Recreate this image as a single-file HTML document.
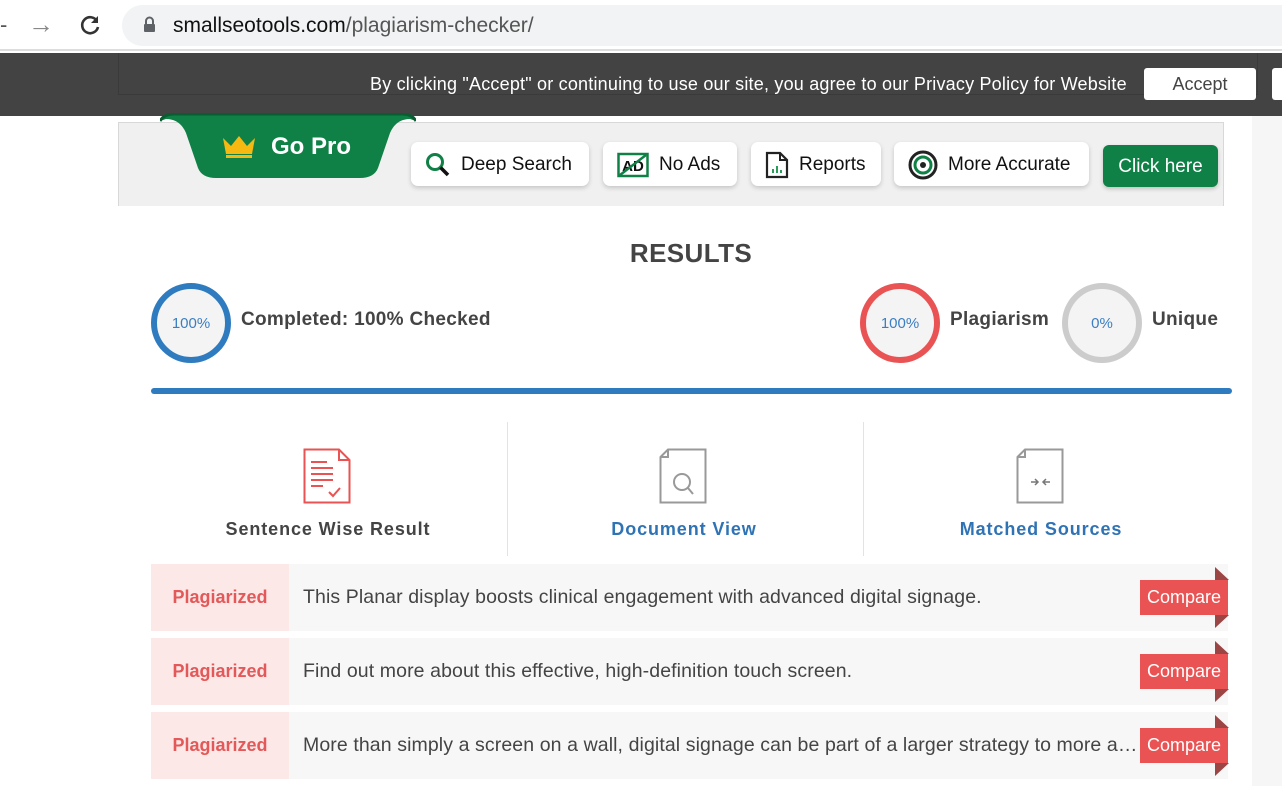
<!DOCTYPE html>
<html><head><meta charset="utf-8"><style>
*{margin:0;padding:0;box-sizing:border-box}
body{width:1282px;height:786px;overflow:hidden;background:#fff;font-family:"Liberation Sans",Arial,sans-serif;position:relative}
.abs{position:absolute}
.btn{position:absolute;top:142px;height:44px;background:#fff;border-radius:7px;box-shadow:0 2px 5px rgba(0,0,0,.18);font-size:19px;color:#111;display:flex;align-items:center;padding-left:14px;gap:10px;padding-top:2px}
.circ{position:absolute;width:80px;height:80px;border-radius:50%;background:#f4f4f4;border:6px solid;display:flex;align-items:center;justify-content:center;font-size:15px;color:#3b7ec2}
.lbl{position:absolute;font-size:19px;font-weight:bold;color:#444;letter-spacing:0.3px}
.row{position:absolute;left:151px;width:1077px;height:67px;background:#f7f7f7}
.row .p{position:absolute;left:0;top:0;width:138px;height:67px;background:#fde8e8;color:#e35858;font-weight:bold;font-size:18px;display:flex;align-items:center;justify-content:center}
.row .t{position:absolute;left:152px;top:22px;font-size:19.5px;letter-spacing:0.1px;color:#444;white-space:nowrap;width:838px;overflow:hidden;text-overflow:ellipsis}
.row .c{position:absolute;left:989px;top:16px;width:88px;height:35px;background:#e95353;color:#fff;font-size:18px;display:flex;align-items:center;justify-content:center}
.row .f1{position:absolute;left:1064px;top:3px;width:0;height:0;border-left:14px solid #9b4545;border-top:13px solid transparent}
.row .f2{position:absolute;left:1064px;top:51px;width:0;height:0;border-left:14px solid #9b4545;border-bottom:13px solid transparent}
.tab{position:absolute;top:519px;font-size:18px;font-weight:bold;text-align:center;width:356px;letter-spacing:0.9px}
</style></head><body>
<div class="abs" style="left:0;top:0;width:1282px;height:51px;background:#fff;border-bottom:2px solid #ddd"></div>
<div class="abs" style="left:0;top:12px;font-size:22px;color:#555">-</div>
<div class="abs" style="left:28px;top:9px;font-size:26px;color:#888">→</div>
<svg class="abs" style="left:78px;top:13px" width="24" height="24" viewBox="0 0 24 24"><path d="M19 8A8 8 0 1 0 20 14" fill="none" stroke="#333" stroke-width="2.6"/><path d="M20 3v7h-7z" fill="#333"/></svg>
<div class="abs" style="left:122px;top:5px;width:1200px;height:41px;border-radius:21px;background:#f1f3f4"></div>
<svg class="abs" style="left:143px;top:16px" width="13" height="17" viewBox="0 0 13 17"><path d="M3 8V5a3.5 3.5 0 0 1 7 0v3" fill="none" stroke="#5f6368" stroke-width="2"/><rect x="1" y="8" width="11" height="8" rx="1" fill="#5f6368"/></svg>
<div class="abs" style="left:173px;top:14px;font-size:21px;color:#111">smallseotools.com<span style="color:#555">/plagiarism-checker/</span></div>
<div class="abs" style="left:0;top:53px;width:1282px;height:63px;background:#434343"></div>
<div class="abs" style="left:118px;top:53px;width:1140px;height:42px;border:1px solid #3a3a3a;border-top:none"></div>
<div class="abs" style="left:370px;top:74px;font-size:18px;color:#fff;letter-spacing:0.2px">By clicking "Accept" or continuing to use our site, you agree to our Privacy Policy for Website</div>
<div class="abs" style="left:1144px;top:68px;width:112px;height:32px;background:#fff;border-radius:3px;font-size:18px;color:#444;text-align:center;line-height:32px">Accept</div>
<div class="abs" style="left:1272px;top:68px;width:20px;height:32px;background:#fff;border-radius:3px"></div>
<div class="abs" style="left:1252px;top:116px;width:30px;height:670px;background:#f6f6f6"></div>
<div class="abs" style="left:118px;top:122px;width:1106px;height:84px;background:#f0f0f0;border:1px solid #d8d8d8;border-bottom:none"></div>
<svg class="abs" style="left:160px;top:113px" width="256" height="66" viewBox="0 0 256 66"><path d="M0 8Q4 1 14 1H242Q252 1 256 8L250 6Q236 6 230 20L218 55Q214 65 200 65H56Q42 65 38 55L26 20Q20 6 6 6Z" fill="#108146"/><path d="M0 8Q4 1 14 1H242Q252 1 256 8" fill="none" stroke="#0a5c31" stroke-width="3"/></svg>
<svg class="abs" style="left:221px;top:134px" width="36" height="24" viewBox="0 0 36 24"><path d="M2 4L10 12L18 2L26 12L34 4L31 20H5Z" fill="#f6b911"/><rect x="5" y="21" width="26" height="3" fill="#f6b911"/></svg>
<div class="abs" style="left:271px;top:133px;font-size:24px;font-weight:bold;color:#fff">Go Pro</div>
<div class="btn" style="left:411px;width:178px"><svg width="26" height="26" viewBox="0 0 26 26"><circle cx="10" cy="10" r="7.5" fill="none" stroke="#108146" stroke-width="3"/><path d="M15.5 15.5L23 23" stroke="#111" stroke-width="3.5"/></svg>Deep Search</div>
<div class="btn" style="left:603px;width:134px"><svg width="32" height="26" viewBox="0 0 32 26"><rect x="1.5" y="2" width="29" height="22" fill="none" stroke="#108146" stroke-width="2.5"/><text x="16" y="19" font-size="15" font-weight="bold" text-anchor="middle" fill="#111" font-family="Liberation Sans">AD</text><path d="M3 23L29 3" stroke="#108146" stroke-width="2.5"/></svg>No Ads</div>
<div class="btn" style="left:751px;width:130px"><svg width="24" height="28" viewBox="0 0 24 28"><path d="M2 2H15L22 9V26H2Z" fill="none" stroke="#222" stroke-width="2.2"/><path d="M15 2V9H22" fill="none" stroke="#222" stroke-width="2"/><rect x="7" y="18" width="2" height="4" fill="#2a9d5c"/><rect x="11" y="15" width="2" height="7" fill="#2a9d5c"/><rect x="15" y="19" width="2" height="3" fill="#2a9d5c"/></svg>Reports</div>
<div class="btn" style="left:894px;width:195px"><svg width="30" height="30" viewBox="0 0 30 30"><circle cx="15" cy="15" r="13" fill="none" stroke="#222" stroke-width="3"/><circle cx="15" cy="15" r="8" fill="none" stroke="#108146" stroke-width="3"/><circle cx="15" cy="15" r="3" fill="#222"/></svg>More Accurate</div>
<div class="abs" style="left:1103px;top:145px;width:115px;height:42px;background:#108146;border-radius:6px;color:#fff;font-size:19px;text-align:center;line-height:43px;box-shadow:0 2px 4px rgba(0,0,0,.2)">Click here</div>
<div class="abs" style="left:118px;top:206px;width:1134px;height:580px;background:#fff"></div>
<div class="abs" style="left:0;top:238px;width:1382px;text-align:center;font-size:26px;font-weight:bold;color:#444;letter-spacing:0.4px">RESULTS</div>
<div class="circ" style="left:151px;top:283px;border-color:#2f7bbf">100%</div>
<div class="lbl" style="left:241px;top:309px">Completed: 100% Checked</div>
<div class="circ" style="left:860px;top:283px;border-color:#e95353">100%</div>
<div class="lbl" style="left:950px;top:309px">Plagiarism</div>
<div class="circ" style="left:1062px;top:283px;border-color:#ccc">0%</div>
<div class="lbl" style="left:1152px;top:309px">Unique</div>
<div class="abs" style="left:151px;top:388px;width:1081px;height:6px;background:#2f7bbf;border-radius:3px"></div>
<div class="abs" style="left:507px;top:422px;width:1px;height:134px;background:#e3e3e3"></div>
<div class="abs" style="left:863px;top:422px;width:1px;height:134px;background:#e3e3e3"></div>
<svg class="abs" style="left:303px;top:448px" width="48" height="56" viewBox="0 0 48 56"><path d="M1.5 1.5H36L46.5 12V54.5H1.5Z" fill="none" stroke="#e95353" stroke-width="2"/><path d="M36 1.5V12H46.5" fill="none" stroke="#e95353" stroke-width="2"/><path d="M8 14H24M8 20H30M8 26H30M8 32H30M8 38H20" stroke="#e95353" stroke-width="2"/><path d="M26 44L30 48L37 40" fill="none" stroke="#e95353" stroke-width="2"/></svg>
<svg class="abs" style="left:659px;top:448px" width="48" height="56" viewBox="0 0 48 56"><path d="M1.5 9L9 1.5H46.5V54.5H1.5Z" fill="none" stroke="#999" stroke-width="2"/><path d="M9 1.5V9H1.5" fill="none" stroke="#999" stroke-width="2"/><circle cx="23" cy="34" r="8" fill="none" stroke="#999" stroke-width="2"/><path d="M29 40L34 46" stroke="#999" stroke-width="2"/></svg>
<svg class="abs" style="left:1016px;top:448px" width="48" height="56" viewBox="0 0 48 56"><path d="M1.5 9L9 1.5H46.5V54.5H1.5Z" fill="none" stroke="#999" stroke-width="2"/><path d="M9 1.5V9H1.5" fill="none" stroke="#999" stroke-width="2"/><path d="M15 34H22M19 31L22 34L19 37M34 34H27M30 31L27 34L30 37" fill="none" stroke="#777" stroke-width="1.5"/></svg>
<div class="tab" style="left:150px;color:#444">Sentence Wise Result</div>
<div class="tab" style="left:506px;color:#2f73b5">Document View</div>
<div class="tab" style="left:863px;color:#2f73b5">Matched Sources</div>
<div class="row" style="top:564px"><div class="p">Plagiarized</div><div class="t">This Planar display boosts clinical engagement with advanced digital signage.</div><div class="f1"></div><div class="f2"></div><div class="c">Compare</div></div>
<div class="row" style="top:638px"><div class="p">Plagiarized</div><div class="t">Find out more about this effective, high-definition touch screen.</div><div class="f1"></div><div class="f2"></div><div class="c">Compare</div></div>
<div class="row" style="top:712px"><div class="p">Plagiarized</div><div class="t">More than simply a screen on a wall, digital signage can be part of a larger strategy to more accurately target</div><div class="f1"></div><div class="f2"></div><div class="c">Compare</div></div>
</body></html>
